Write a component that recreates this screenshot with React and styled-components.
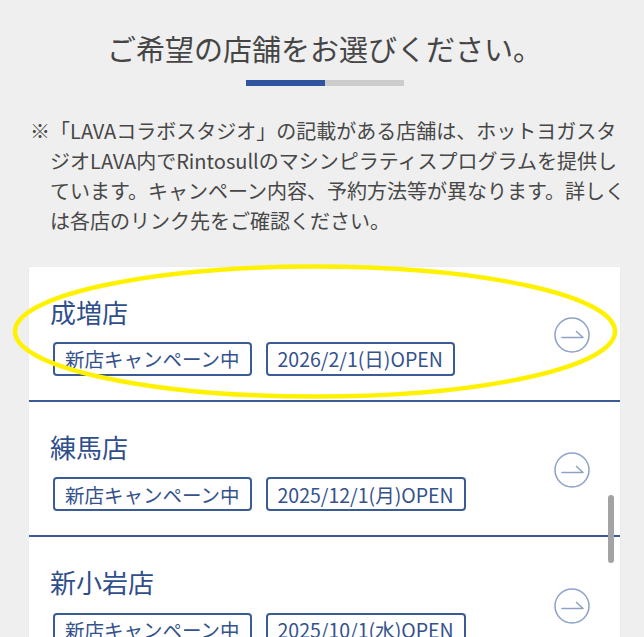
import React from "react";
import styled, { createGlobalStyle } from "styled-components";

const GlobalStyle = createGlobalStyle`
  html, body {
    margin: 0;
    padding: 0;
    background: #efefef;
    overflow: hidden;
  }
  body {
    font-family: "Noto Sans CJK JP", "Noto Sans", sans-serif;
  }
  * { box-sizing: border-box; }
`;

const Page = styled.div`
  position: relative;
  height: 100vh;
  overflow: hidden;
  padding: 28px 24px 0 29px;
`;

const Title = styled.h1`
  margin: 0;
  font-size: 29px;
  line-height: 1.4;
  font-weight: 400;
  color: #454545;
  text-align: center;
  white-space: nowrap;
`;

const ProgressTrack = styled.div`
  width: 158px;
  height: 6px;
  margin: 11px auto 0;
  background: #cccccc;
`;

const ProgressFill = styled.div`
  height: 100%;
  background: #2f55a0;
`;

const Note = styled.p`
  margin: 30px 0 0 1px;
  padding-left: 20px;
  text-indent: -20px;
  font-size: 20px;
  line-height: 30px;
  color: #474747;
  white-space: nowrap;
`;

const Card = styled.ul`
  list-style: none;
  margin: 31px 0 0;
  padding: 0;
  background: #ffffff;
  box-shadow: 0 0 2px rgba(0, 0, 0, 0.04);
`;

const Item = styled.li`
  display: flex;
  align-items: center;
  padding: 27px 30px 24px 21px;
  border-bottom: 2px solid #3b5b94;
`;

const Info = styled.div`
  display: flex;
  flex-direction: column;
`;

const Name = styled.div`
  font-size: 26px;
  line-height: 1.4;
  color: #2f4e8c;
`;

const Tags = styled.div`
  display: flex;
  gap: 14px;
  margin: 12px 0 0 3px;
`;

const Tag = styled.span`
  display: inline-flex;
  align-items: center;
  height: 34px;
  padding: 0 10px;
  border: 2px solid #3b5b94;
  border-radius: 4px;
  font-size: 19.5px;
  color: #34528c;
  white-space: nowrap;
`;

const ArrowWrap = styled.div`
  margin-left: auto;
  width: 36px;
  height: 36px;
  flex: none;
`;

const ScrollThumb = styled.div`
  position: absolute;
  left: 608px;
  top: 495px;
  width: 6px;
  height: 68px;
  border-radius: 3px;
  background: #a3a3a3;
`;

const Highlight = styled.svg`
  position: absolute;
  left: 0;
  top: 0;
  pointer-events: none;
`;

const ArrowIcon = () => (
  <ArrowWrap>
    <svg width="36" height="36" viewBox="0 0 36 36" fill="none">
      <circle cx="18" cy="18" r="17" stroke="#8ea2c6" strokeWidth="1.5" />
      <path d="M8 20.5 H29 L22.5 14.5" stroke="#8ea2c6" strokeWidth="1.6" strokeLinecap="round" strokeLinejoin="round" />
    </svg>
  </ArrowWrap>
);

const stores = [
  { name: "成増店", open: "2026/2/1(日)OPEN" },
  { name: "練馬店", open: "2025/12/1(月)OPEN" },
  { name: "新小岩店", open: "2025/10/1(水)OPEN" },
  { name: "池袋店", open: "2025/9/1(月)OPEN" },
];

export default function App() {
  return (
    <>
      <GlobalStyle />
      <Page>
        <Title>ご希望の店舗をお選びください。</Title>
        <ProgressTrack>
          <ProgressFill style={{ width: "50%" }} />
        </ProgressTrack>
        <Note>
          ※「LAVAコラボスタジオ」の記載がある店舗は、ホットヨガスタ
          <br />
          ジオLAVA内でRintosullのマシンピラティスプログラムを提供し
          <br />
          ています。キャンペーン内容、予約方法等が異なります。詳しく
          <br />
          は各店のリンク先をご確認ください。
        </Note>
        <Card>
          {stores.map((s) => (
            <Item key={s.name}>
              <Info>
                <Name>{s.name}</Name>
                <Tags>
                  <Tag>新店キャンペーン中</Tag>
                  <Tag>{s.open}</Tag>
                </Tags>
              </Info>
              <ArrowIcon />
            </Item>
          ))}
        </Card>
        <ScrollThumb />
        <Highlight width="644" height="637" viewBox="0 0 644 637">
          <ellipse cx="315" cy="331.5" rx="300" ry="65" stroke="#fff200" strokeWidth="4.5" fill="none" />
        </Highlight>
      </Page>
    </>
  );
}
